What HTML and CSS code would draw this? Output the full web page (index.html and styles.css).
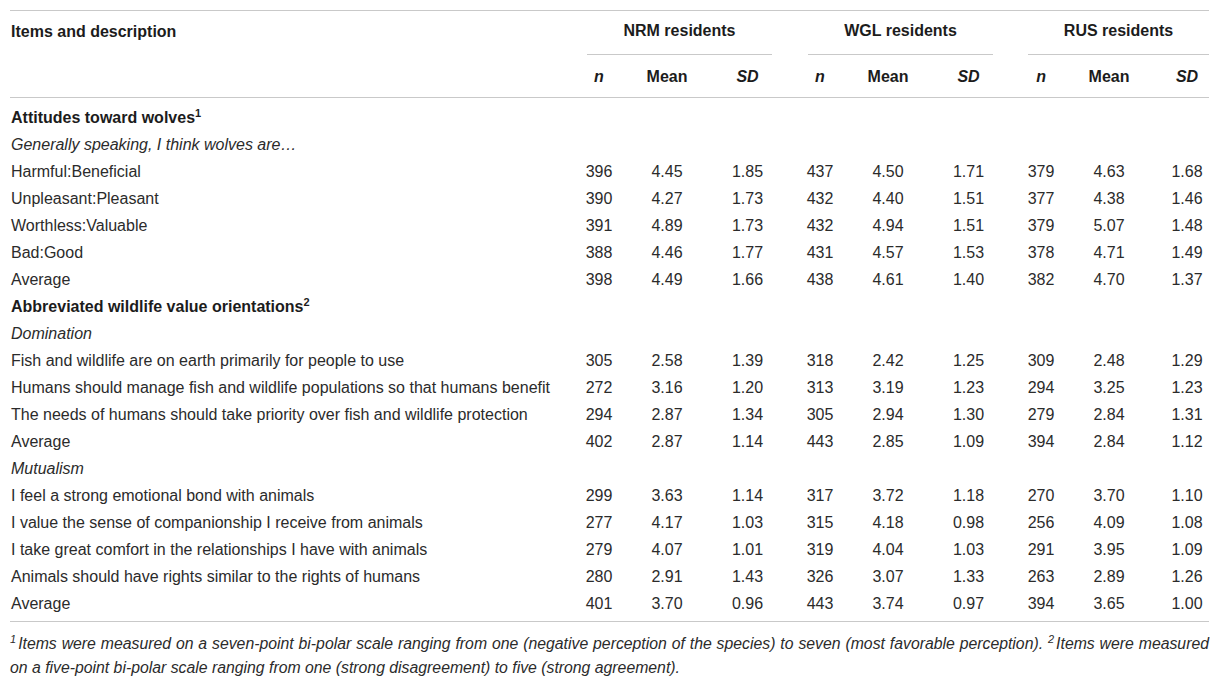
FILE: index.html
```html
<!DOCTYPE html>
<html lang="en">
<head>
<meta charset="utf-8">
<title>Table</title>
<link rel="stylesheet" href="styles.css">
</head>
<body>
<div class="wrap">
<table class="data">
  <colgroup>
    <col class="c-item">
    <col class="c-n"><col class="c-mean"><col class="c-sd">
    <col class="c-n"><col class="c-mean"><col class="c-sd">
    <col class="c-n"><col class="c-mean"><col class="c-sd-last">
  </colgroup>
  <thead>
    <tr class="hr1">
      <th class="items" rowspan="2">Items and description</th>
      <th colspan="3" class="grp"><div class="grp-in">NRM residents</div></th>
      <th colspan="3" class="grp"><div class="grp-in">WGL residents</div></th>
      <th colspan="3" class="grp"><div class="grp-in last">RUS residents</div></th>
    </tr>
    <tr class="hr2">
      <th><i>n</i></th><th>Mean</th><th><i>SD</i></th>
      <th><i>n</i></th><th>Mean</th><th><i>SD</i></th>
      <th><i>n</i></th><th>Mean</th><th class="lastcol"><i>SD</i></th>
    </tr>
  </thead>
  <tbody>
    <tr class="first"><td class="sec" colspan="10">Attitudes toward wolves<sup>1</sup></td></tr>
    <tr><td class="sub" colspan="10">Generally speaking, I think wolves are…</td></tr>
    <tr><td>Harmful:Beneficial</td><td>396</td><td>4.45</td><td>1.85</td><td>437</td><td>4.50</td><td>1.71</td><td>379</td><td>4.63</td><td class="lastcol">1.68</td></tr>
    <tr><td>Unpleasant:Pleasant</td><td>390</td><td>4.27</td><td>1.73</td><td>432</td><td>4.40</td><td>1.51</td><td>377</td><td>4.38</td><td class="lastcol">1.46</td></tr>
    <tr><td>Worthless:Valuable</td><td>391</td><td>4.89</td><td>1.73</td><td>432</td><td>4.94</td><td>1.51</td><td>379</td><td>5.07</td><td class="lastcol">1.48</td></tr>
    <tr><td>Bad:Good</td><td>388</td><td>4.46</td><td>1.77</td><td>431</td><td>4.57</td><td>1.53</td><td>378</td><td>4.71</td><td class="lastcol">1.49</td></tr>
    <tr><td>Average</td><td>398</td><td>4.49</td><td>1.66</td><td>438</td><td>4.61</td><td>1.40</td><td>382</td><td>4.70</td><td class="lastcol">1.37</td></tr>
    <tr><td class="sec" colspan="10">Abbreviated wildlife value orientations<sup>2</sup></td></tr>
    <tr><td class="sub" colspan="10">Domination</td></tr>
    <tr><td>Fish and wildlife are on earth primarily for people to use</td><td>305</td><td>2.58</td><td>1.39</td><td>318</td><td>2.42</td><td>1.25</td><td>309</td><td>2.48</td><td class="lastcol">1.29</td></tr>
    <tr><td>Humans should manage fish and wildlife populations so that humans benefit</td><td>272</td><td>3.16</td><td>1.20</td><td>313</td><td>3.19</td><td>1.23</td><td>294</td><td>3.25</td><td class="lastcol">1.23</td></tr>
    <tr><td>The needs of humans should take priority over fish and wildlife protection</td><td>294</td><td>2.87</td><td>1.34</td><td>305</td><td>2.94</td><td>1.30</td><td>279</td><td>2.84</td><td class="lastcol">1.31</td></tr>
    <tr><td>Average</td><td>402</td><td>2.87</td><td>1.14</td><td>443</td><td>2.85</td><td>1.09</td><td>394</td><td>2.84</td><td class="lastcol">1.12</td></tr>
    <tr><td class="sub" colspan="10">Mutualism</td></tr>
    <tr><td>I feel a strong emotional bond with animals</td><td>299</td><td>3.63</td><td>1.14</td><td>317</td><td>3.72</td><td>1.18</td><td>270</td><td>3.70</td><td class="lastcol">1.10</td></tr>
    <tr><td>I value the sense of companionship I receive from animals</td><td>277</td><td>4.17</td><td>1.03</td><td>315</td><td>4.18</td><td>0.98</td><td>256</td><td>4.09</td><td class="lastcol">1.08</td></tr>
    <tr><td>I take great comfort in the relationships I have with animals</td><td>279</td><td>4.07</td><td>1.01</td><td>319</td><td>4.04</td><td>1.03</td><td>291</td><td>3.95</td><td class="lastcol">1.09</td></tr>
    <tr><td>Animals should have rights similar to the rights of humans</td><td>280</td><td>2.91</td><td>1.43</td><td>326</td><td>3.07</td><td>1.33</td><td>263</td><td>2.89</td><td class="lastcol">1.26</td></tr>
    <tr class="last"><td>Average</td><td>401</td><td>3.70</td><td>0.96</td><td>443</td><td>3.74</td><td>0.97</td><td>394</td><td>3.65</td><td class="lastcol">1.00</td></tr>
  </tbody>
</table>
<p class="foot"><sup>1</sup>Items were measured on a seven-point bi-polar scale ranging from one (negative perception of the species) to seven (most favorable perception). <sup>2</sup>Items were measured on a five-point bi-polar scale ranging from one (strong disagreement) to five (strong agreement).</p>
</div>
</body>
</html>
```
FILE: styles.css
```css
html, body {
  margin: 0;
  padding: 0;
  background: #ffffff;
}

body {
  font-family: "Liberation Sans", Arial, sans-serif;
  font-size: 16px;
  color: #2b2b2b;
}

.wrap {
  padding: 10px 0 0 10px;
  width: 1199px;
}

.data {
  width: 1199px;
  table-layout: fixed;
  border-collapse: collapse;
  border-top: 1px solid #c9c9c9;
}

.c-item { width: 559px; }
.c-n { width: 60px; }
.c-mean { width: 76px; }
.c-sd { width: 85px; }
.c-sd-last { width: 62px; }

th {
  font-weight: bold;
  color: #1c1c1c;
  padding: 0;
}

th.items {
  text-align: left;
  vertical-align: top;
  padding: 11px 0 0 1px;
  line-height: 20px;
  border-bottom: 1px solid #c9c9c9;
}

th.grp {
  vertical-align: top;
  height: 44px;
}

.grp-in {
  margin: 0 18px;
  height: 43px;
  line-height: 40px;
  text-align: center;
  border-bottom: 1px solid #c9c9c9;
}

.grp-in.last {
  margin: 0 0 0 17px;
}

.hr2 th {
  height: 40px;
  padding-top: 2px;
  line-height: 40px;
  text-align: center;
  border-bottom: 1px solid #c9c9c9;
}

.hr2 th.lastcol {
  padding-left: 18px;
}

td {
  padding: 0;
  height: 27px;
  line-height: 27px;
  text-align: center;
  white-space: nowrap;
}

td:first-child {
  text-align: left;
  padding-left: 1px;
}

td.lastcol {
  padding-left: 18px;
}

td.sec {
  font-weight: bold;
  color: #1c1c1c;
}

td.sub {
  font-style: italic;
}

sup {
  font-size: 11px;
  line-height: 0;
  vertical-align: 6px;
}

tr.first td {
  padding-top: 6px;
}

tr.last td {
  padding-bottom: 4px;
  border-bottom: 1px solid #c9c9c9;
}

.foot {
  margin: 0;
  padding: 10px 0 0 0;
  font-style: italic;
  font-size: 15.8px;
  line-height: 24px;
  text-align: justify;
  color: #2b2b2b;
}

.foot sup {
  font-size: 11px;
  line-height: 0;
  vertical-align: 6px;
  margin-right: 2px;
}
```
